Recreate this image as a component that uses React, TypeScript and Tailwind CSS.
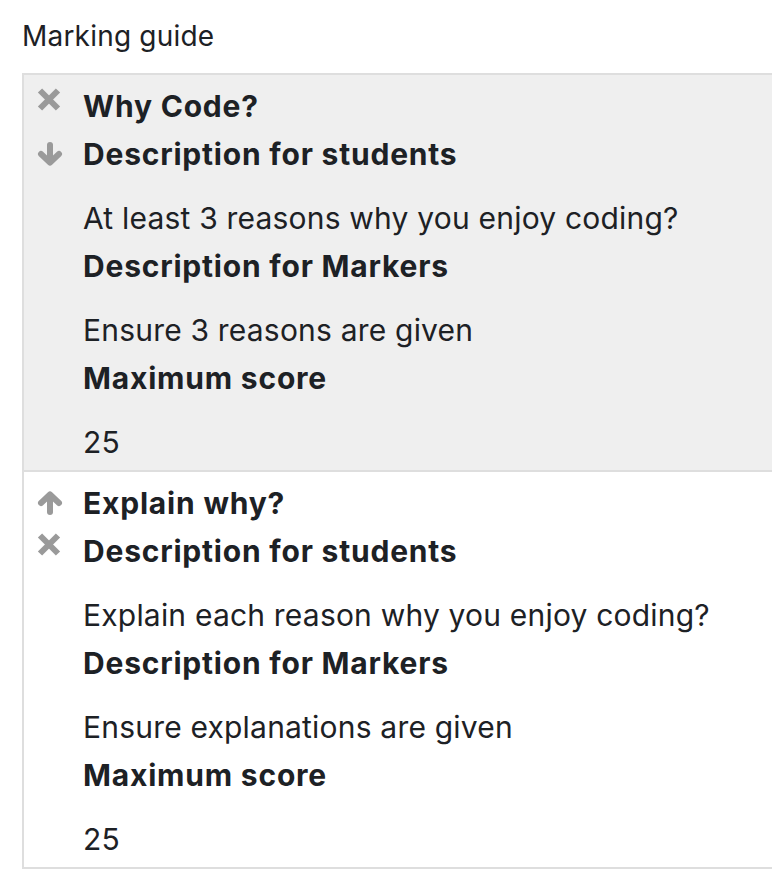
import React from "react";

const C = "#9a9a9a";

const XIcon = () => (
  <svg width="24" height="24" viewBox="0 0 24 24" className="-mt-[12px]">
    <path d="M3 2.5 L21 20.5 M21 2.5 L3 20.5" stroke={C} strokeWidth="6" fill="none" />
  </svg>
);

const DownIcon = () => (
  <svg width="26" height="26" viewBox="0 0 26 26">
    <g stroke={C} strokeWidth="6" fill="none" strokeLinecap="round" strokeLinejoin="round">
      <path d="M13 4 V20" />
      <path d="M4 13 L13 21.5 L22 13" />
    </g>
  </svg>
);

const UpIcon = () => (
  <svg width="26" height="26" viewBox="0 0 26 26">
    <g stroke={C} strokeWidth="6" fill="none" strokeLinecap="round" strokeLinejoin="round">
      <path d="M13 22 V6" />
      <path d="M4 13 L13 4.5 L22 13" />
    </g>
  </svg>
);

type Crit = {
  name: string;
  students: string;
  markers: string;
  score: string;
  icons: [React.ReactNode, React.ReactNode];
  bg: string;
};

function Row({ c }: { c: Crit }) {
  return (
    <div className={`flex pt-[7px] pb-[4px] ${c.bg}`}>
      <div className="w-[59px] shrink-0 pl-[13px] flex flex-col">
        <div className="h-[48px] flex items-center">{c.icons[0]}</div>
        <div className="h-[48px] flex items-center">{c.icons[1]}</div>
      </div>
      <div className="flex flex-col text-[30px] leading-[48px] text-[#1d2125] tracking-[0.2px]">
        <div className="font-bold tracking-[0.8px]">{c.name}</div>
        <div className="font-bold tracking-[0.8px]">Description for students</div>
        <div className="mt-[16px]">{c.students}</div>
        <div className="font-bold tracking-[0.8px]">Description for Markers</div>
        <div className="mt-[16px]">{c.markers}</div>
        <div className="font-bold tracking-[0.8px]">Maximum score</div>
        <div className="mt-[16px]">{c.score}</div>
      </div>
    </div>
  );
}

export default function App() {
  const crits: Crit[] = [
    {
      name: "Why Code?",
      students: "At least 3 reasons why you enjoy coding?",
      markers: "Ensure 3 reasons are given",
      score: "25",
      icons: [<XIcon />, <DownIcon />],
      bg: "bg-[#efefef]",
    },
    {
      name: "Explain why?",
      students: "Explain each reason why you enjoy coding?",
      markers: "Ensure explanations are given",
      score: "25",
      icons: [<UpIcon />, <XIcon />],
      bg: "bg-white",
    },
  ];
  return (
    <div className="w-[772px] h-[870px] overflow-hidden bg-white font-['Inter',sans-serif] pl-[22px] pt-[15px]">
      <div className="text-[28px] leading-[42px] tracking-[0.2px] text-[#1d2125]">Marking guide</div>
      <div className="mt-[16px] border-2 border-r-0 border-[#dedede] flex flex-col">
        <Row c={crits[0]} />
        <div className="h-[2px] bg-[#dedede]" />
        <Row c={crits[1]} />
      </div>
    </div>
  );
}
